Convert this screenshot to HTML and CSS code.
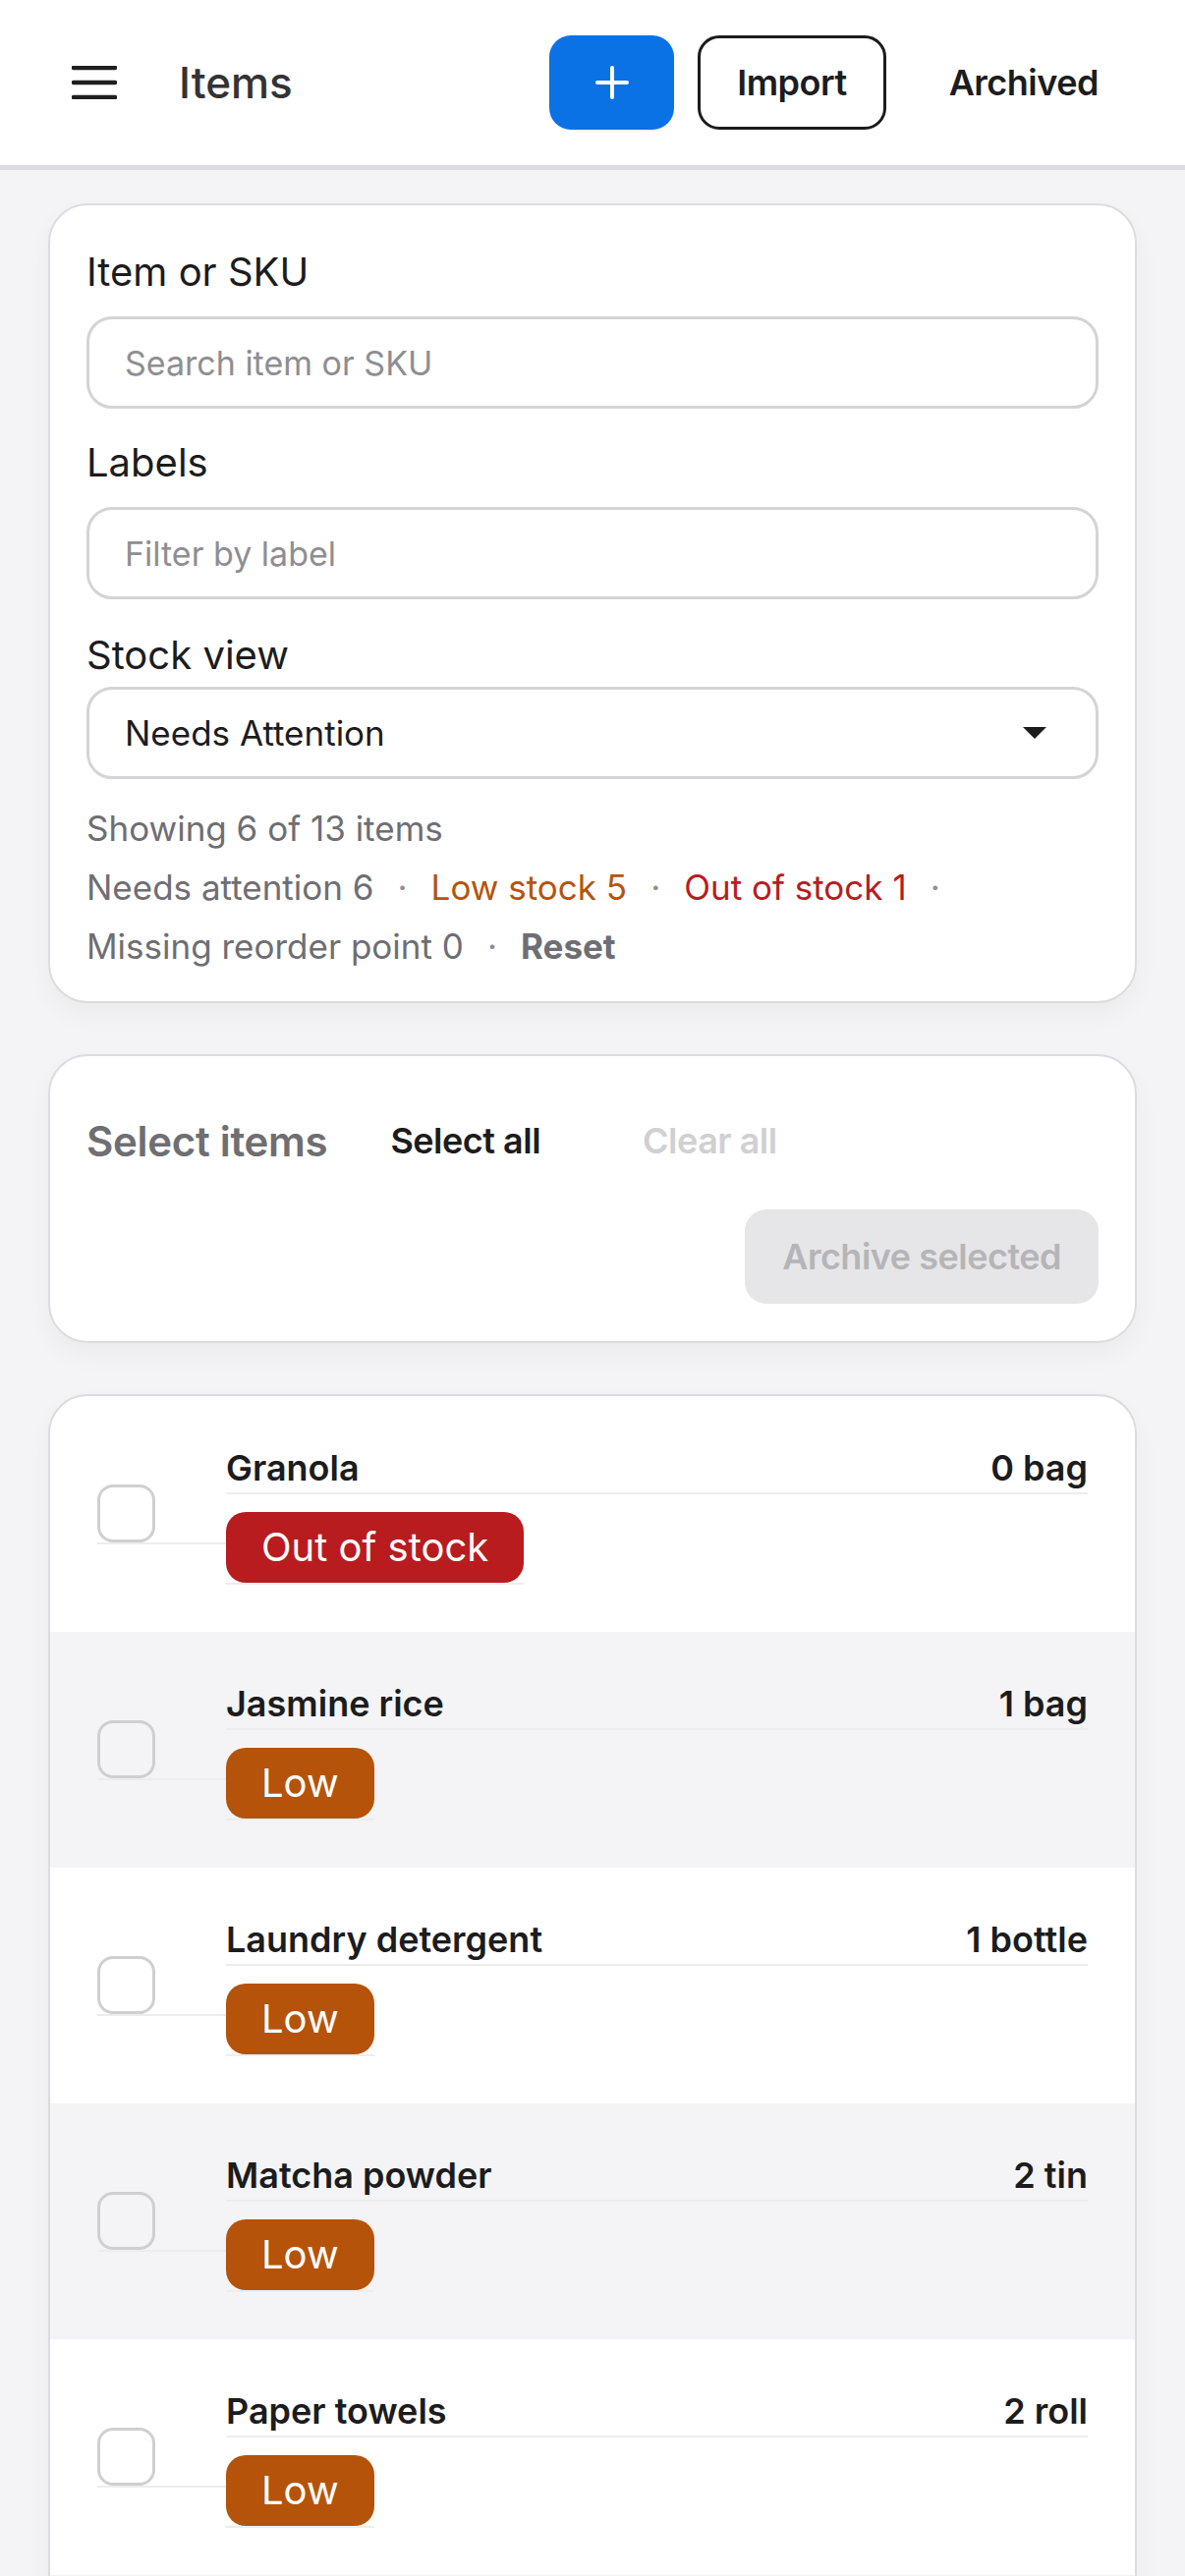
FILE: index.html
```html
<!DOCTYPE html>
<html lang="en">
<head>
  <meta charset="utf-8">
  <title>Items</title>
  <link rel="stylesheet" href="styles.css">
</head>
<body>
  <header class="topbar">
    <button class="menu-btn" aria-label="Menu">
      <svg width="46" height="34" viewBox="0 0 46 34">
        <path d="M2 2h42M2 17h42M2 32h42" stroke="#1f1f1f" stroke-width="4.5" stroke-linecap="round"/>
      </svg>
    </button>
    <h1 class="title">Items</h1>
    <div class="actions">
      <button class="btn btn-primary" aria-label="Add item">
        <svg width="34" height="34" viewBox="0 0 34 34">
          <path d="M17 2v30M2 17h30" stroke="#fff" stroke-width="4" stroke-linecap="round"/>
        </svg>
      </button>
      <button class="btn btn-outline">Import</button>
      <button class="btn btn-ghost">Archived</button>
    </div>
  </header>

  <main class="content">
    <section class="card filters">
      <label class="field-label">Item or SKU</label>
      <input class="text-input" type="text" placeholder="Search item or SKU">

      <label class="field-label field-gap">Labels</label>
      <input class="text-input" type="text" placeholder="Filter by label">

      <label class="field-label field-gap-lg">Stock view</label>
      <div class="select">
        <span>Needs Attention</span>
        <svg width="24" height="12" viewBox="0 0 24 12"><path d="M0 0h24L12 12z" fill="#1c1c1e"/></svg>
      </div>

      <div class="summary">
        <div>Showing 6 of 13 items</div>
        <div class="counts">
          <span class="count">Needs attention 6<i class="sep">·</i></span>
          <span class="count count-low">Low stock 5<i class="sep">·</i></span>
          <span class="count count-out">Out of stock 1<i class="sep">·</i></span>
          <span class="count">Missing reorder point 0<i class="sep">·</i></span>
          <span class="count count-reset">Reset</span>
        </div>
      </div>
    </section>

    <section class="card selection">
      <span class="selection-title">Select items</span>
      <button class="btn btn-link">Select all</button>
      <button class="btn btn-link btn-muted">Clear all</button>
      <button class="btn btn-disabled">Archive selected</button>
    </section>

    <section class="card item-list">
      <div class="item-row">
        <label class="check-cell"><input type="checkbox" class="checkbox"></label>
        <div class="item-main">
          <div class="item-head"><span>Granola</span><span>0 bag</span></div>
          <div class="badge-wrap"><span class="badge badge-out">Out of stock</span></div>
        </div>
      </div>
      <div class="item-row">
        <label class="check-cell"><input type="checkbox" class="checkbox"></label>
        <div class="item-main">
          <div class="item-head"><span>Jasmine rice</span><span>1 bag</span></div>
          <div class="badge-wrap"><span class="badge badge-low">Low</span></div>
        </div>
      </div>
      <div class="item-row">
        <label class="check-cell"><input type="checkbox" class="checkbox"></label>
        <div class="item-main">
          <div class="item-head"><span>Laundry detergent</span><span>1 bottle</span></div>
          <div class="badge-wrap"><span class="badge badge-low">Low</span></div>
        </div>
      </div>
      <div class="item-row">
        <label class="check-cell"><input type="checkbox" class="checkbox"></label>
        <div class="item-main">
          <div class="item-head"><span>Matcha powder</span><span>2 tin</span></div>
          <div class="badge-wrap"><span class="badge badge-low">Low</span></div>
        </div>
      </div>
      <div class="item-row">
        <label class="check-cell"><input type="checkbox" class="checkbox"></label>
        <div class="item-main">
          <div class="item-head"><span>Paper towels</span><span>2 roll</span></div>
          <div class="badge-wrap"><span class="badge badge-low">Low</span></div>
        </div>
      </div>
      <div class="item-row">
        <label class="check-cell"><input type="checkbox" class="checkbox"></label>
        <div class="item-main">
          <div class="item-head"><span>Sparkling water</span><span>2 can</span></div>
          <div class="badge-wrap"><span class="badge badge-low">Low</span></div>
        </div>
      </div>
    </section>
  </main>
</body>
</html>
```

FILE: styles.css
```css
* {
  box-sizing: border-box;
}

body {
  margin: 0;
  background: #f4f4f6;
  font-family: "Inter", "Noto Sans", sans-serif;
  color: #1c1c1e;
}

button {
  font-family: inherit;
  cursor: pointer;
}

/* top bar */

.topbar {
  display: flex;
  align-items: center;
  height: 173px;
  padding: 0 48px 0 73px;
  background: #fff;
  border-bottom: 5px solid #dcdce0;
}

.menu-btn {
  display: flex;
  padding: 0;
  border: 0;
  background: none;
}

.title {
  margin: 0 0 0 63px;
  font-size: 44px;
  font-weight: 500;
  color: #333336;
}

.actions {
  display: flex;
  align-items: center;
  gap: 24px;
  margin-left: auto;
}

.btn {
  display: inline-flex;
  align-items: center;
  justify-content: center;
  height: 96px;
  padding: 0 40px;
  border: 0;
  border-radius: 22px;
  background: none;
  font-size: 36px;
  font-weight: 600;
  letter-spacing: -0.5px;
  white-space: nowrap;
  color: #1c1c1e;
}

.btn-primary {
  width: 127px;
  padding: 0;
  background: #0b72e6;
}

.btn-outline {
  border: 3px solid #1c1c1e;
  background: #fff;
  padding: 0 37px;
}

/* page */

.content {
  display: flex;
  flex-direction: column;
  gap: 52px;
  padding: 34px 49px;
}

.card {
  background: #fff;
  border: 2px solid #dcdce0;
  border-radius: 40px;
  box-shadow: 0 12px 26px rgba(0, 0, 0, 0.04);
}

/* filters */

.filters {
  display: flex;
  flex-direction: column;
  padding: 40px 37px 26px;
}

.field-label {
  font-size: 40px;
  line-height: 56px;
  color: #1c1c1e;
}

.field-gap {
  margin-top: 27px;
}

.field-gap-lg {
  margin-top: 29px;
}

.text-input {
  margin-top: 17px;
  height: 94px;
  padding: 0 36px;
  border: 3px solid #d4d4d6;
  border-radius: 26px;
  font-family: inherit;
  font-size: 34px;
  color: #1c1c1e;
  outline: none;
}

.text-input::placeholder {
  color: #8e8e92;
}

.select {
  display: flex;
  align-items: center;
  justify-content: space-between;
  margin-top: 4px;
  height: 94px;
  padding: 0 50px 0 36px;
  border: 3px solid #d4d4d6;
  border-radius: 26px;
  font-size: 35px;
}

.summary {
  margin-top: 20px;
  font-size: 35px;
  line-height: 60px;
  color: #6e6e73;
}

.counts {
  display: flex;
  flex-wrap: wrap;
}

.count {
  white-space: nowrap;
}

.sep {
  font-style: normal;
  margin: 0 24px;
  color: #8e8e92;
}

.count-low {
  color: #b5540d;
}

.count-out {
  color: #b81c21;
}

.count-reset {
  font-weight: 700;
}

/* selection */

.selection {
  display: flex;
  flex-wrap: wrap;
  align-items: center;
  gap: 22px 24px;
  padding: 38px 37px;
}

.selection-title {
  font-size: 42px;
  font-weight: 600;
  letter-spacing: -0.3px;
  color: #6e6e73;
}

.btn-muted {
  color: #d0d0d2;
}

.btn-disabled {
  margin-left: auto;
  padding: 0 38px;
  background: #e6e6e8;
  color: #b5b5b8;
}

/* item list */

.item-list {
  overflow: hidden;
}

.item-row {
  display: flex;
  align-items: center;
  height: 240px;
  padding: 0 48px;
}

.item-row:nth-child(even) {
  background: #f4f4f6;
}

.check-cell {
  display: flex;
  padding-right: 72px;
  border-bottom: 2px solid #ededf0;
}

.checkbox {
  appearance: none;
  width: 59px;
  height: 59px;
  margin: 0;
  border: 3px solid #cfcfd2;
  border-radius: 16px;
  background: transparent;
}

.item-main {
  flex: 1;
  display: flex;
  flex-direction: column;
  align-items: flex-start;
}

.item-head {
  display: flex;
  justify-content: space-between;
  width: 100%;
  font-size: 36px;
  font-weight: 600;
  line-height: 50px;
  border-bottom: 2px solid #ededf0;
}

.badge-wrap {
  display: flex;
  margin-top: 18px;
  border-bottom: 2px solid #ededf0;
}

.badge {
  height: 72px;
  padding: 0 36px;
  border-radius: 20px;
  font-size: 40px;
  line-height: 72px;
  color: #fff;
}

.badge-out {
  background: #b81c1f;
}

.badge-low {
  background: #b5530b;
}
```
